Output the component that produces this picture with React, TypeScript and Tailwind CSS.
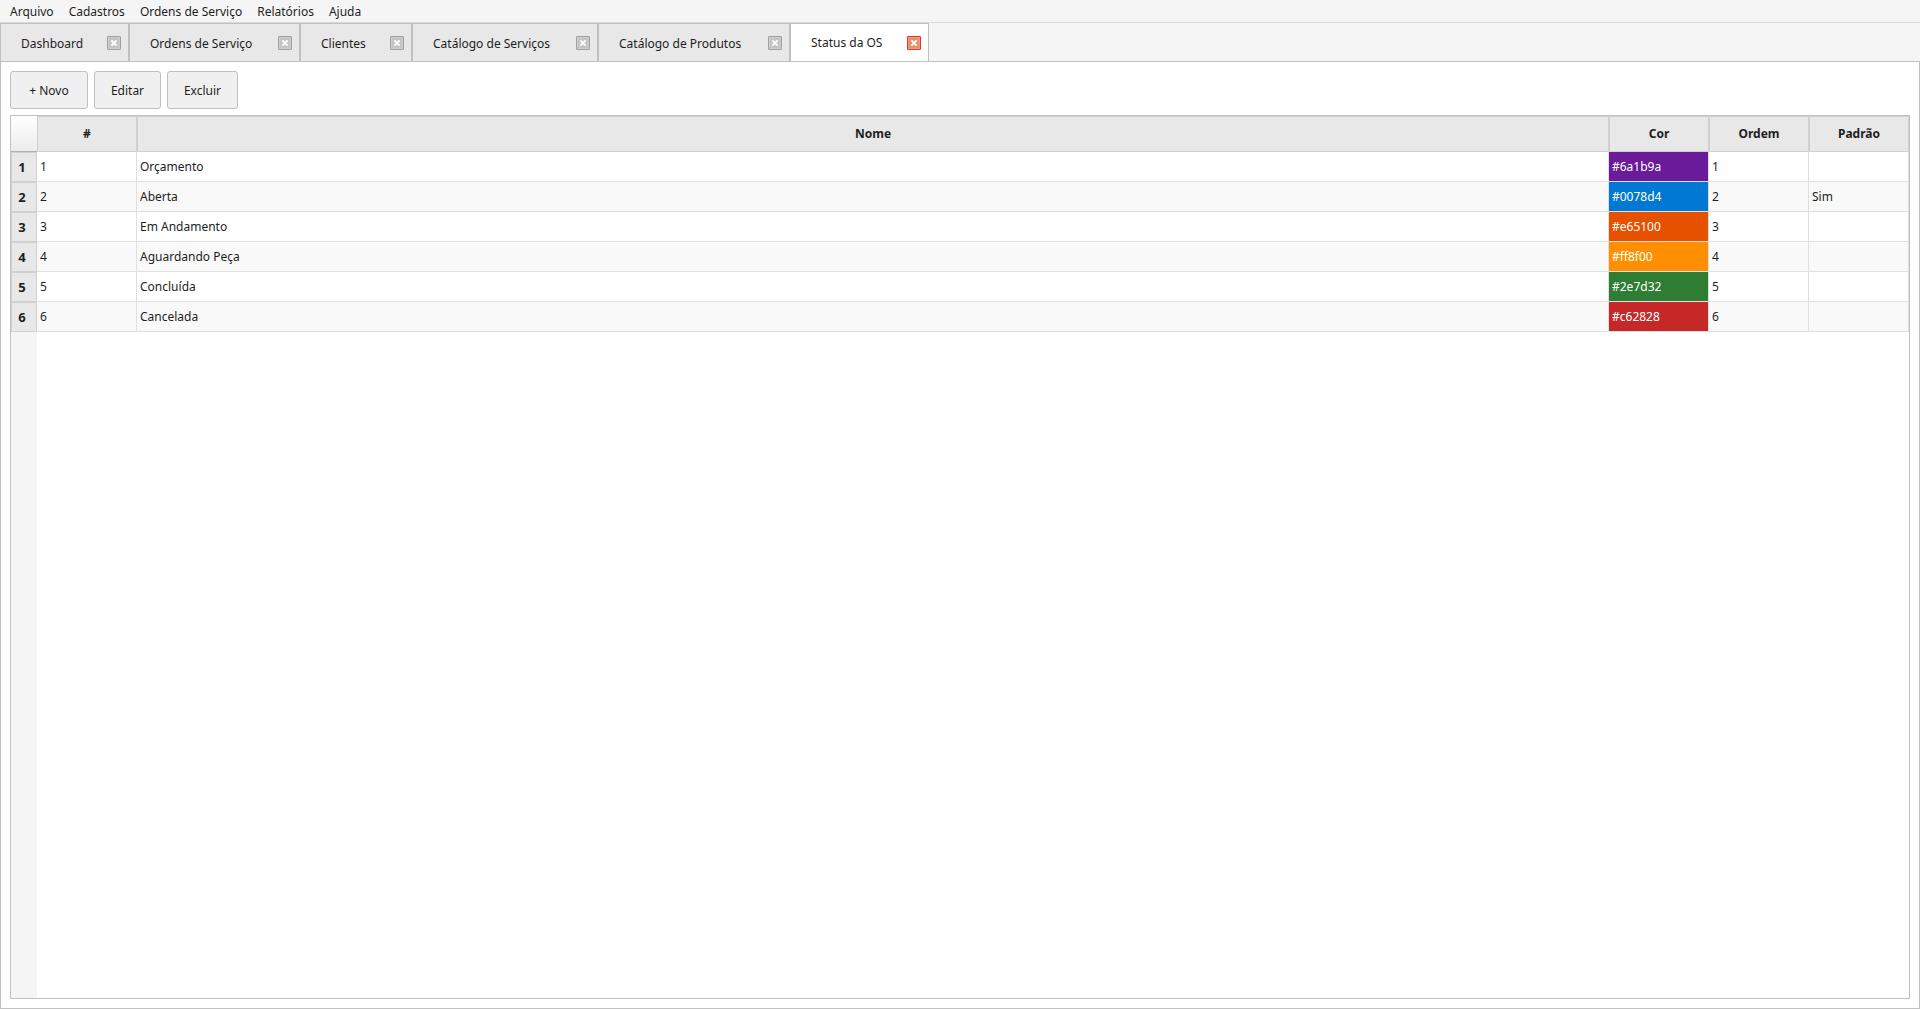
import React, { useState } from "react";
import clsx from "clsx";

const menus = ["Arquivo", "Cadastros", "Ordens de Serviço", "Relatórios", "Ajuda"];

const tabs = [
    { title: "Dashboard", width: "w-[129px]" },
    { title: "Ordens de Serviço", width: "w-[171px]" },
    { title: "Clientes", width: "w-[112px]" },
    { title: "Catálogo de Serviços", width: "w-[186px]" },
    { title: "Catálogo de Produtos", width: "w-[192px]" },
    { title: "Status da OS", width: "w-[139px]" },
];

const actions = [
    { label: "+ Novo", width: "w-[78px]" },
    { label: "Editar", width: "w-[67px]" },
    { label: "Excluir", width: "w-[71px]" },
];

const columns = ["#", "Nome", "Cor", "Ordem", "Padrão"];

const statuses = [
    { id: 1, name: "Orçamento", color: "#6a1b9a", order: 1, isDefault: false },
    { id: 2, name: "Aberta", color: "#0078d4", order: 2, isDefault: true },
    { id: 3, name: "Em Andamento", color: "#e65100", order: 3, isDefault: false },
    { id: 4, name: "Aguardando Peça", color: "#ff8f00", order: 4, isDefault: false },
    { id: 5, name: "Concluída", color: "#2e7d32", order: 5, isDefault: false },
    { id: 6, name: "Cancelada", color: "#c62828", order: 6, isDefault: false },
];

function CloseIcon({ active }: { active: boolean }) {
    return (
        <svg width="14" height="14" viewBox="0 0 14 14" aria-hidden="true">
            <rect
                x="0.5"
                y="0.5"
                width="13"
                height="13"
                rx="0.5"
                fill={active ? "#e8906c" : "#c4c4c4"}
                stroke={active ? "#d93a2b" : "#a0a0a0"}
            />
            <rect x="1.5" y="1.5" width="11" height="11" fill="none" stroke={active ? "#ec9f80" : "#cecece"} />
            <path d="M4.4 4.4 9.6 9.6M9.6 4.4 4.4 9.6" stroke="#fff" strokeWidth="1.9" />
        </svg>
    );
}

function MenuBar() {
    return (
        <nav className="flex h-[23px] shrink-0 items-center gap-[15px] border-b border-[#d8d8d8] px-[10px] pt-[2px]">
            {menus.map((menu) => (
                <button key={menu} type="button" className="whitespace-nowrap">
                    {menu}
                </button>
            ))}
        </nav>
    );
}

function TabBar({ current, onSelect }: { current: number; onSelect: (index: number) => void }) {
    return (
        <div className="flex h-[38px] shrink-0">
            {tabs.map((tab, index) => {
                const active = index === current;
                return (
                    <div
                        key={tab.title}
                        className={clsx(
                            "flex items-center justify-between border border-b-0 border-[#c0c0c0] pr-[7px]",
                            tab.width,
                            active ? "bg-white" : "bg-[#e8e8e8]"
                        )}
                    >
                        <button
                            type="button"
                            onClick={() => onSelect(index)}
                            className={clsx("h-full grow pl-5 text-left whitespace-nowrap", !active && "pt-[2px]")}
                        >
                            {tab.title}
                        </button>
                        <button type="button" aria-label={`Fechar ${tab.title}`} className="shrink-0">
                            <CloseIcon active={active} />
                        </button>
                    </div>
                );
            })}
        </div>
    );
}

function StatusTable() {
    return (
        <table className="w-full table-fixed border-separate border-spacing-0">
            <colgroup>
                <col className="w-[26px]" />
                <col className="w-[100px]" />
                <col />
                <col className="w-[100px]" />
                <col className="w-[100px]" />
                <col className="w-[100px]" />
            </colgroup>
            <thead>
                <tr className="h-9">
                    <td className="border-b border-[#b0b0b0] bg-linear-to-b from-white to-[#ececec] p-0" />
                    {columns.map((column) => (
                        <th key={column} scope="col" className="border border-[#d0d0d0] bg-[#e8e8e8] p-0 font-bold">
                            {column}
                        </th>
                    ))}
                </tr>
            </thead>
            <tbody>
                {statuses.map((status, index) => (
                    <tr key={status.id} className="h-[30px] even:bg-[#f9f9f9]">
                        <th scope="row" className="border border-[#d0d0d0] bg-[#e8e8e8] p-0 pr-1 text-center text-[13px] font-bold">
                            {index + 1}
                        </th>
                        <td className="border-r border-b border-[#e0e0e0] p-0 pl-[3px]">{status.id}</td>
                        <td className="border-r border-b border-[#e0e0e0] p-0 pl-[3px]">{status.name}</td>
                        <td
                            className="border-r border-b border-[#e0e0e0] bg-clip-padding p-0 pl-[3px] text-white"
                            style={{ backgroundColor: status.color }}
                        >
                            {status.color}
                        </td>
                        <td className="border-r border-b border-[#e0e0e0] p-0 pl-[3px]">{status.order}</td>
                        <td className="border-r border-b border-[#e0e0e0] p-0 pl-[3px]">{status.isDefault ? "Sim" : ""}</td>
                    </tr>
                ))}
            </tbody>
        </table>
    );
}

export default function App() {
    const [current, setCurrent] = useState(5);

    return (
        <div className="flex h-screen flex-col bg-[#f5f5f5] font-['Noto_Sans','Open_Sans',sans-serif] text-[12px] leading-4 text-[#1e1e1e]">
            <MenuBar />
            <TabBar current={current} onSelect={setCurrent} />
            <main className="flex min-h-0 grow flex-col gap-[6px] border border-[#c0c0c0] bg-white p-[9px]">
                <div className="flex gap-[6px]">
                    {actions.map((action) => (
                        <button
                            key={action.label}
                            type="button"
                            className={clsx("h-[38px] rounded-[3px] border border-[#c0c0c0] bg-[#f0f0f0] pt-[2px]", action.width)}
                        >
                            {action.label}
                        </button>
                    ))}
                </div>
                <div className="flex min-h-0 grow flex-col border border-[#c0c0c0]">
                    <StatusTable />
                    {/* empty part of the row header */}
                    <div className="w-[26px] grow bg-[#f5f5f5]" />
                </div>
            </main>
        </div>
    );
}
